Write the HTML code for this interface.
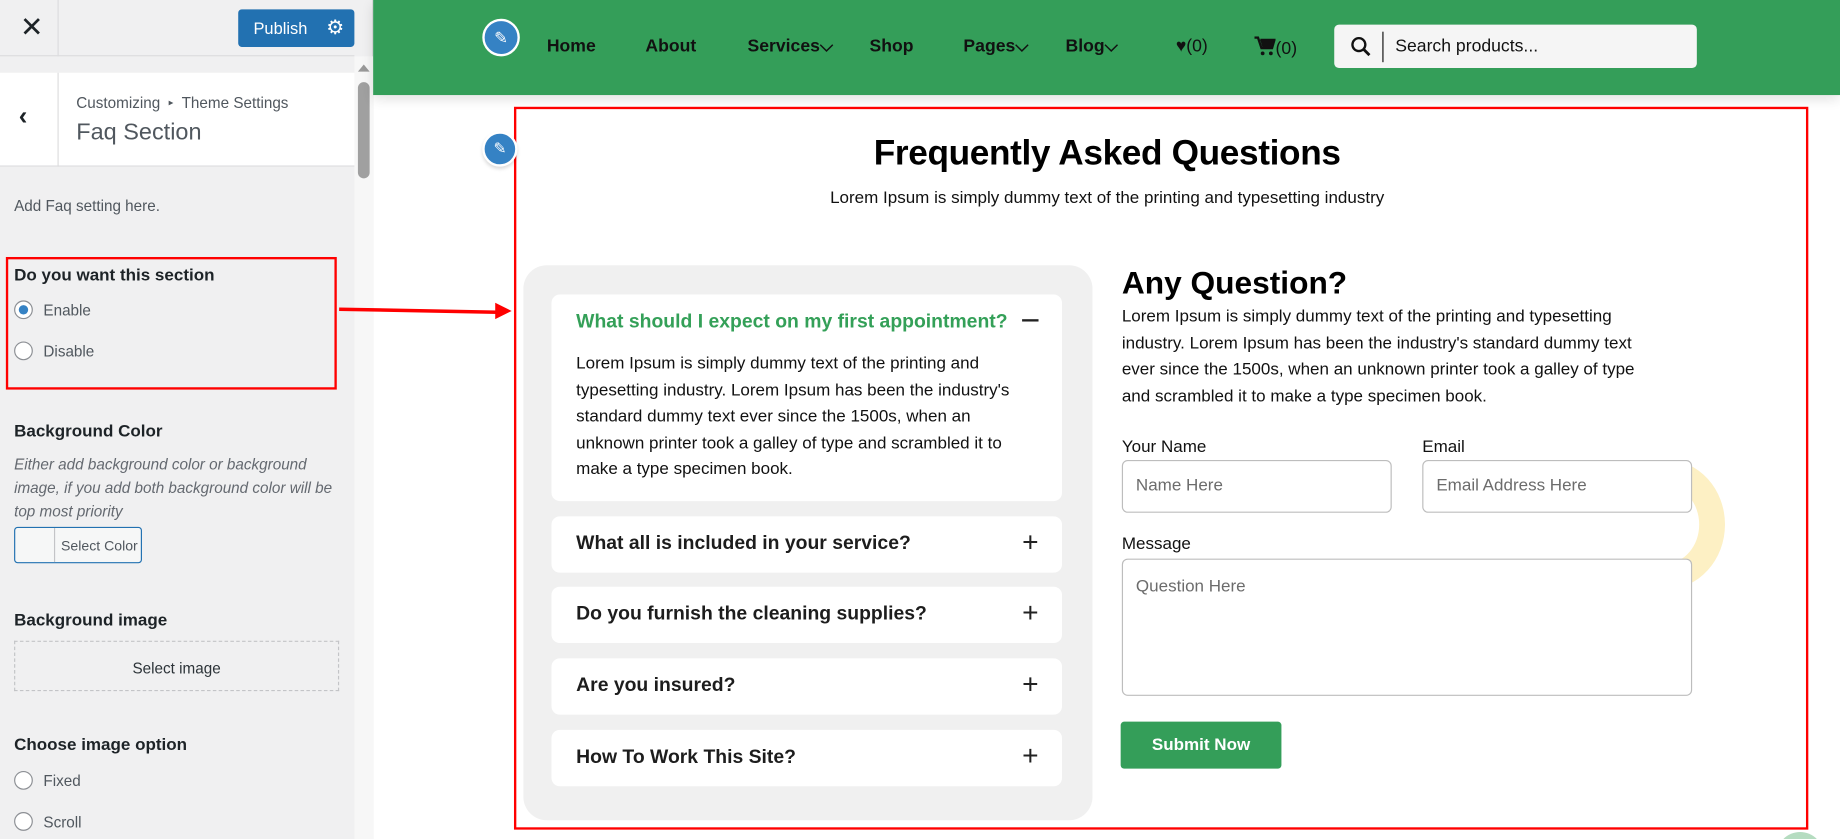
<!DOCTYPE html>
<html><head><meta charset="utf-8"><style>
*{box-sizing:border-box;margin:0;padding:0}
html,body{width:1840px;height:839px;overflow:hidden;background:#fff}
#w{position:absolute;left:0;top:0;width:1568px;height:715px;transform:scale(1.17347);transform-origin:0 0;font-family:"Liberation Sans",sans-serif;overflow:hidden}
.a{position:absolute}
.sb{left:0;top:0;width:318px;height:715px;background:#f0f0f1;border-right:1px solid #dcdcde}
.lbl{font-size:14.5px;color:#1d2327;font-weight:600}
.radio{width:16px;height:16px;border:1px solid #8c8f94;border-radius:50%;background:#fff}
.rt{font-size:13px;color:#50575e}
.nav{font-size:15px;font-weight:bold;color:#111;top:31px}
.item{left:470px;width:435px;height:48px;background:#fff;border-radius:7px}
.item .q{position:absolute;left:21px;top:14px;font-size:16.5px;font-weight:bold;color:#1d1d1d}
.item .p{position:absolute;right:20px;top:9px;font-size:24px;color:#222;font-weight:300}
.inp{border:1px solid #bdbdbd;border-radius:5px;background:#fff;font-size:14.5px;color:#6c6c6c;padding:13px 11px}
</style></head><body><div id="w">
<div class="a sb"></div>
<div class="a" style="left:0;top:0;width:302px;height:48px;border-bottom:1px solid #dcdcde"></div>
<div class="a" style="left:49px;top:0;width:1px;height:48px;background:#dcdcde"></div>
<div class="a" style="left:17px;top:9px;font-size:24px;color:#1d2327">✕</div>
<div class="a" style="left:203px;top:8px;width:99px;height:32px;background:#2271b1;border-radius:3px;color:#fff;font-size:14px;padding:8px 0 0 13px">Publish</div>
<div class="a" style="left:278px;top:15px;color:#fff;font-size:17px;line-height:1">⚙</div>
<div class="a" style="left:302px;top:48px;width:16px;height:667px;background:#f7f7f7"></div>
<div class="a" style="left:305px;top:55px;width:0;height:0;border-left:5px solid transparent;border-right:5px solid transparent;border-bottom:6px solid #999"></div>
<div class="a" style="left:305px;top:70px;width:10px;height:82px;background:#a0a0a0;border-radius:5px"></div>
<div class="a" style="left:0;top:62px;width:302px;height:80px;background:#fff;border-bottom:1px solid #dcdcde"></div>
<div class="a" style="left:49px;top:62px;width:1px;height:80px;background:#dcdcde"></div>
<div class="a" style="left:16px;top:86px;font-size:22px;color:#1d2327;font-weight:bold">‹</div>
<div class="a" style="left:65px;top:80px;font-size:13px;color:#50575e">Customizing &nbsp;<span style="font-size:8px;vertical-align:2px">▸</span>&nbsp; Theme Settings</div>
<div class="a" style="left:65px;top:102px;font-size:20px;color:#50575e">Faq Section</div>
<div class="a rt" style="left:12px;top:168px">Add Faq setting here.</div>
<div class="a" style="left:5px;top:219px;width:282px;height:113px;border:2px solid #f00"></div>
<div class="a lbl" style="left:12px;top:227px">Do you want this section</div>
<div class="a radio" style="left:12px;top:256px"><div style="margin:3px;width:8px;height:8px;border-radius:50%;background:#3582c4"></div></div>
<div class="a rt" style="left:37px;top:257px">Enable</div>
<div class="a radio" style="left:12px;top:291px"></div>
<div class="a rt" style="left:37px;top:292px">Disable</div>
<div class="a lbl" style="left:12px;top:360px">Background Color</div>
<div class="a" style="left:12px;top:386px;width:280px;font-size:13px;color:#646970;font-style:italic;line-height:20px">Either add background color or background image, if you add both background color will be top most priority</div>
<div class="a" style="left:12px;top:449px;width:109px;height:31px;border:1px solid #2271b1;border-radius:3px;background:#f6f7f7"></div>
<div class="a" style="left:46px;top:450px;width:1px;height:29px;background:#c3c4c7"></div>
<div class="a" style="left:52px;top:458px;font-size:12px;color:#50575e">Select Color</div>
<div class="a lbl" style="left:12px;top:521px">Background image</div>
<div class="a" style="left:12px;top:546px;width:277px;height:43px;border:1px dashed #c3c4c7;text-align:center;padding-top:15px;font-size:13px;color:#2c3338">Select image</div>
<div class="a lbl" style="left:12px;top:627px">Choose image option</div>
<div class="a radio" style="left:12px;top:657px"></div><div class="a rt" style="left:37px;top:658px">Fixed</div>
<div class="a radio" style="left:12px;top:692px"></div><div class="a rt" style="left:37px;top:693px">Scroll</div>
<div class="a" style="left:289px;top:262px;width:135px;height:3px;background:#f00;transform-origin:0 50%;transform:rotate(1.1deg)"></div>
<div class="a" style="left:422px;top:258px;width:0;height:0;border-top:7px solid transparent;border-bottom:7px solid transparent;border-left:14px solid #f00"></div>
<div class="a" style="left:318px;top:0;width:1250px;height:81px;background:#349e59;box-shadow:0 4px 10px rgba(0,0,0,.12)"></div>
<div class="a" style="left:411px;top:16px;width:32px;height:32px;border-radius:50%;background:#3582c4;border:2px solid #fff;color:#fff;text-align:center;font-size:14px;line-height:28px">✎</div>
<div class="a nav" style="left:466px">Home</div>
<div class="a nav" style="left:550px">About</div>
<div class="a nav" style="left:637px">Services⌵</div>
<div class="a nav" style="left:741px">Shop</div>
<div class="a nav" style="left:821px">Pages⌵</div>
<div class="a nav" style="left:908px">Blog⌵</div>
<div class="a nav" style="left:1002px;font-weight:normal">♥(0)</div>
<div class="a" style="left:1069px;top:31px;font-size:15px;color:#111">
<svg width="18" height="17" viewBox="0 0 18 17" style="vertical-align:-2px"><path d="M0 1h3l3 9h9l2-7H5" fill="none" stroke="#111" stroke-width="2"/><path d="M5 3h12l-2 7H7z" fill="#111"/><circle cx="7" cy="14.5" r="1.6" fill="#111"/><circle cx="14" cy="14.5" r="1.6" fill="#111"/></svg>(0)</div>
<div class="a" style="left:1137px;top:21px;width:309px;height:37px;background:#f5f5f5;border-radius:4px"></div>
<svg class="a" style="left:1151px;top:31px" width="18" height="18" viewBox="0 0 18 18"><circle cx="7" cy="7" r="5.5" fill="none" stroke="#111" stroke-width="2"/><path d="M11 11l5 5" stroke="#111" stroke-width="2.4"/></svg>
<div class="a" style="left:1178px;top:27px;width:1px;height:26px;background:#111"></div>
<div class="a" style="left:1189px;top:31px;font-size:15px;color:#111">Search products...</div>
<div class="a" style="left:438px;top:91px;width:1103px;height:616px;border:2px solid #f00"></div>
<div class="a" style="left:411px;top:112px;width:30px;height:30px;border-radius:50%;background:#3582c4;border:2px solid #fff;color:#fff;text-align:center;font-size:13px;line-height:26px;box-shadow:0 2px 3px rgba(0,0,0,.15)">✎</div>
<div class="a" style="left:438px;top:114px;width:1011px;text-align:center;font-size:30px;font-weight:bold;color:#000;letter-spacing:-0.3px">Frequently Asked Questions</div>
<div class="a" style="left:438px;top:161px;width:1011px;text-align:center;font-size:14.5px;color:#111">Lorem Ipsum is simply dummy text of the printing and typesetting industry</div>
<div class="a" style="left:446px;top:226px;width:485px;height:473px;background:#f0f0f0;border-radius:20px"></div>
<div class="a" style="left:470px;top:251px;width:435px;height:176px;background:#fff;border-radius:7px"></div>
<div class="a" style="left:491px;top:265px;font-size:16.5px;font-weight:bold;color:#34a058">What should I expect on my first appointment?</div>
<div class="a" style="left:871px;top:272px;width:14px;height:2px;background:#222"></div>
<div class="a" style="left:491px;top:299px;width:385px;font-size:14.5px;line-height:22.5px;color:#111">Lorem Ipsum is simply dummy text of the printing and typesetting industry. Lorem Ipsum has been the industry's standard dummy text ever since the 1500s, when an unknown printer took a galley of type and scrambled it to make a type specimen book.</div>
<div class="a item" style="top:440px"><div class="q">What all is included in your service?</div><div class="p">+</div></div>
<div class="a item" style="top:500px"><div class="q">Do you furnish the cleaning supplies?</div><div class="p">+</div></div>
<div class="a item" style="top:561px"><div class="q">Are you insured?</div><div class="p">+</div></div>
<div class="a item" style="top:622px"><div class="q">How To Work This Site?</div><div class="p">+</div></div>
<div class="a" style="left:1370px;top:392px;width:100px;height:110px;border-radius:50%;border:22px solid #fdf0c4;clip-path:inset(0 0 0 45%)"></div>
<div class="a" style="left:956px;top:226px;font-size:27px;font-weight:bold;color:#000">Any Question?</div>
<div class="a" style="left:956px;top:259px;width:462px;font-size:14.5px;line-height:22.5px;color:#111">Lorem Ipsum is simply dummy text of the printing and typesetting industry. Lorem Ipsum has been the industry's standard dummy text ever since the 1500s, when an unknown printer took a galley of type and scrambled it to make a type specimen book.</div>
<div class="a" style="left:956px;top:373px;font-size:14.5px;color:#111">Your Name</div>
<div class="a" style="left:1212px;top:373px;font-size:14.5px;color:#111">Email</div>
<div class="a inp" style="left:956px;top:392px;width:230px;height:45px">Name Here</div>
<div class="a inp" style="left:1212px;top:392px;width:230px;height:45px">Email Address Here</div>
<div class="a" style="left:956px;top:456px;font-size:14.5px;color:#111">Message</div>
<div class="a inp" style="left:956px;top:476px;width:486px;height:117px;padding-top:15px">Question Here</div>
<div class="a" style="left:955px;top:615px;width:137px;height:40px;background:#349e59;border-radius:3px;color:#fff;font-size:14.5px;font-weight:bold;text-align:center;line-height:40px">Submit Now</div>
<div class="a" style="left:1514px;top:709px;width:40px;height:40px;border-radius:50%;background:#b5dcc0"></div>
</div></body></html>
